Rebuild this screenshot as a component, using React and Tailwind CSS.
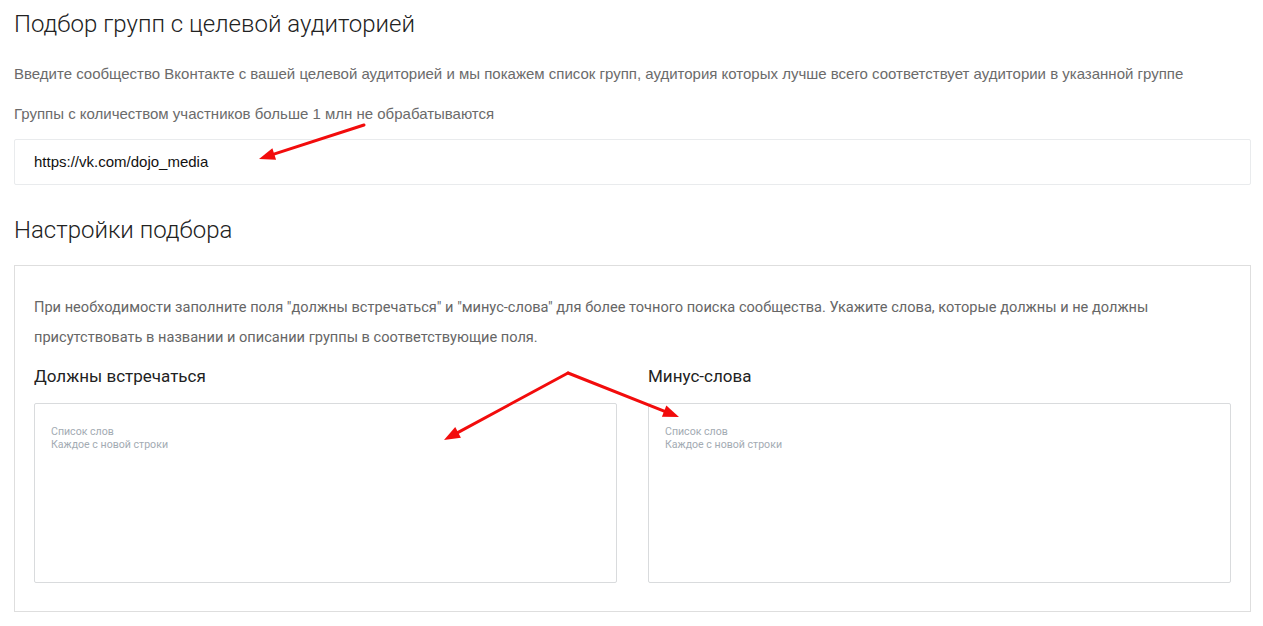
import React from "react";

function Arrow({ x1, y1, x2, y2 }) {
  // line + filled head at (x2, y2)
  const dx = x2 - x1;
  const dy = y2 - y1;
  const len = Math.sqrt(dx * dx + dy * dy);
  const ux = dx / len;
  const uy = dy / len;
  const hl = 16;
  const hw = 6;
  const bx = x2 - ux * hl;
  const by = y2 - uy * hl;
  const p1 = `${bx - uy * hw},${by + ux * hw}`;
  const p2 = `${bx + uy * hw},${by - ux * hw}`;
  return (
    <g>
      <line x1={x1} y1={y1} x2={bx + ux * 2} y2={by + uy * 2} stroke="#f20c0c" strokeWidth="3" strokeLinecap="round" />
      <polygon points={`${x2},${y2} ${p1} ${p2}`} fill="#f20c0c" />
    </g>
  );
}

function WordsField({ title }) {
  return (
    <div className="flex flex-col">
      <h3 className="font-['Roboto',sans-serif] text-[17px] leading-[22px] text-[#222] mb-[16px]">
        {title}
      </h3>
      <textarea
        className="font-['Roboto',sans-serif] h-[180px] w-full resize-none border border-[#d9dbdd] rounded-[2px] px-[16px] pt-[21px] text-[10.6px] leading-[13px] outline-none placeholder:text-[#a3abb3]"
        placeholder={"Список слов\nКаждое с новой строки"}
      />
    </div>
  );
}

export default function App() {
  return (
    <div className="relative min-h-[626px] bg-white pl-[14px] pr-[12px] pt-[10px]">
      <h1 className="font-['Roboto',sans-serif] text-[24px] leading-[28px] font-light text-[#222]">
        Подбор групп с целевой аудиторией
      </h1>
      <p className="font-['Liberation_Sans',Arial,sans-serif] mt-[27px] text-[15px] leading-[18px] text-[#6b6b6b]">
        Введите сообщество Вконтакте с вашей целевой аудиторией и мы покажем список групп, аудитория которых лучше всего соответствует аудитории в указанной группе
      </p>
      <p className="font-['Liberation_Sans',Arial,sans-serif] mt-[22px] text-[15px] leading-[18px] text-[#6b6b6b]">
        Группы с количеством участников больше 1 млн не обрабатываются
      </p>
      <div className="font-['Liberation_Sans',Arial,sans-serif] mt-[16px] h-[46px] border border-[#e9ebed] rounded-[2px] flex items-center px-[19px] text-[15px] text-[#111]">
        https://vk.com/dojo_media
      </div>

      <h2 className="font-['Roboto',sans-serif] mt-[31px] text-[24px] leading-[28px] font-light text-[#222]">
        Настройки подбора
      </h2>

      <div className="mt-[21px] border border-[#dedede] px-[19px] pt-[26px] pb-[28px]">
        <p className="font-['Roboto',sans-serif] text-[14.6px] leading-[30px] text-[#666]">
          При необходимости заполните поля "должны встречаться" и "минус-слова" для более точного поиска сообщества. Укажите слова, которые должны и не должны присутствовать в названии и описании группы в соответствующие поля.
        </p>
        <div className="mt-[13px] grid grid-cols-2 gap-[31px]">
          <WordsField title="Должны встречаться" />
          <WordsField title="Минус-слова" />
        </div>
      </div>

      <svg className="pointer-events-none absolute left-0 top-0" width="1263" height="626">
        <Arrow x1={364} y1={125} x2={259} y2={159} />
        <Arrow x1={568} y1={373} x2={444} y2={440} />
        <Arrow x1={568} y1={373} x2={679} y2={417} />
      </svg>
    </div>
  );
}
